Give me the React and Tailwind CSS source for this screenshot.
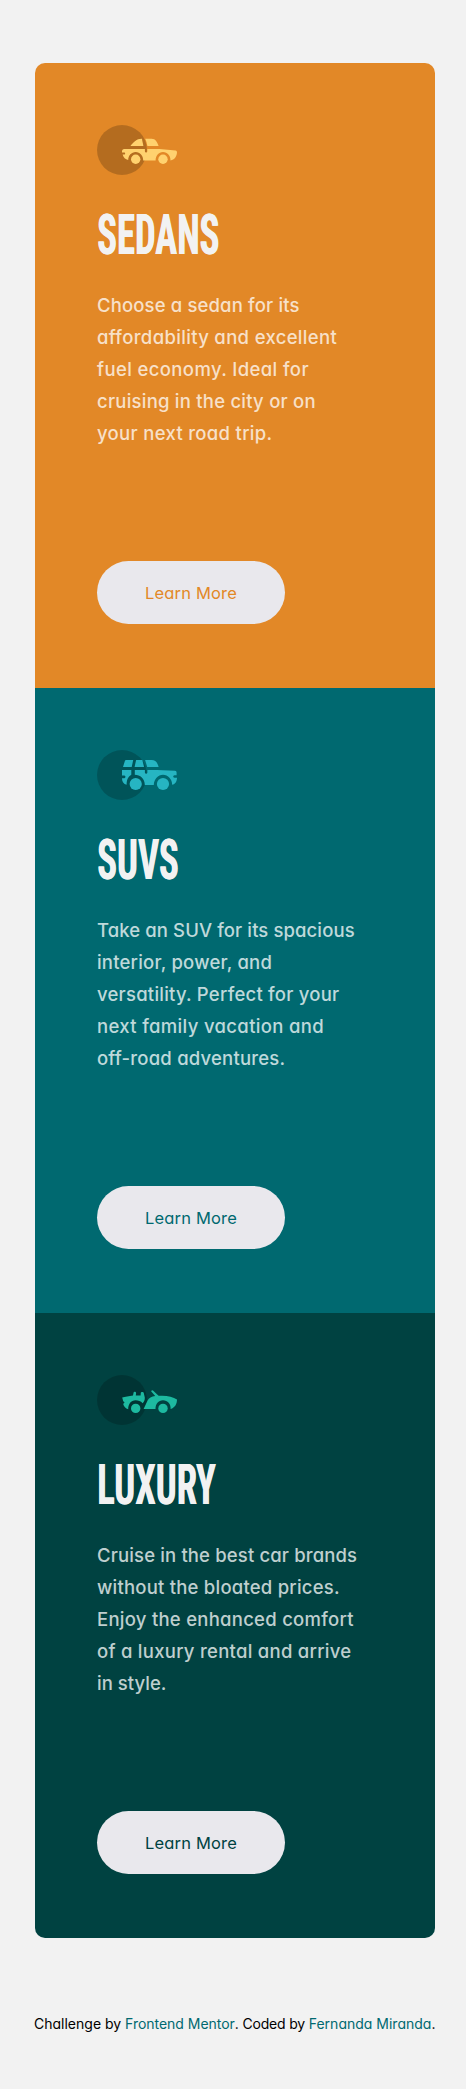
function SedanIcon() {
  return (
    <svg className="block h-[50px] w-20" viewBox="0 0 80 50" aria-hidden="true">
      <circle cx="25" cy="25" r="25" fill="#000" fillOpacity="0.2" />
      <g fill="#ffd26f">
        <path d="M33.4 21C36.6 17.2 39.6 13.8 44.4 13.8H45C45.2 16 46 18.6 46.4 21Z" />
        <path d="M48.2 13.8H54.6C58.6 13.8 60.2 17.2 61.6 21H50.4C50 18.4 49.2 16 48.2 13.8Z" />
        <path d="M27.2 24H47.9V26.2A1.2 1.2 0 0 0 50.3 26.2V24H62.5L78.6 25.6C79.6 25.7 80 26.6 80 27.6C79.7 31.6 77.6 34.9 73.5 35.4C73.6 30.6 70.4 27 66 27C61.6 27 58.6 30.8 58.6 35.4H46.2C46.2 30.6 43 27 38.7 27C34.4 27 31.2 30.6 31.2 35.1C28.3 34.6 26.4 32.6 25.6 29.6H27.4C28.4 29.6 28.4 27.6 27.4 27.6H25V26.4C25 25 25.8 24 27.2 24Z" />
        <circle cx="38.7" cy="34.3" r="4.7" />
        <circle cx="66" cy="34.3" r="4.7" />
      </g>
    </svg>
  );
}

function SuvIcon() {
  return (
    <svg className="block h-[50px] w-20" viewBox="0 0 80 50" aria-hidden="true">
      <circle cx="25" cy="25" r="25" fill="#000" fillOpacity="0.2" />
      <g fill="#26b5c2">
        <path d="M26 17L27.8 11.2C28 10.4 28.6 10 29.4 10H36.2L34.7 17Z" />
        <path d="M39.1 10H45.3L47.1 17H37.6Z" />
        <path d="M48.1 10H54.6C58.7 10 60.5 12.8 61.6 17H50.2Z" />
        <path d="M25 20H34.3V24.8C31.4 26.4 29.7 29.4 29.6 34.7C26.6 34.2 25 31.6 25 28.2H27.4C28.8 28.2 28.8 25.6 27.4 25.6H25Z" />
        <path d="M37.8 20H47.9V22.8A1.3 1.3 0 0 0 50.4 22.8V20H60L78 20.7C79 20.8 79.5 21.4 79.6 22.5V25.2H77.4C75.8 25.2 75.8 27.7 77.4 27.7H80C80 31.4 78.2 34.3 75.2 34.8C75.2 29.2 71 24.8 66 24.8C61 24.8 57 29.2 56.8 35H47.8C47.8 28.6 43.2 24.8 37.8 24.8Z" />
        <circle cx="38.7" cy="34" r="6.1" />
        <circle cx="66" cy="34" r="6.1" />
      </g>
    </svg>
  );
}

function LuxuryIcon() {
  return (
    <svg className="block h-[50px] w-20" viewBox="0 0 80 50" aria-hidden="true">
      <circle cx="25" cy="25" r="25" fill="#000" fillOpacity="0.2" />
      <g fill="#1db9a0">
        <path d="M25.2 22.4C28 22.2 32 21 36 20.6L36.6 17.4C36.8 16.4 39.2 16.8 39.1 18L38.8 20.6H43.6L43.8 17.8C43.8 16.8 46.6 16.8 46.7 17.8L47.8 22.6C48 25 47 27 45.7 28.2C43.6 26 41.3 25.3 38.7 25.3C33.8 25.3 31.2 29.2 31.2 34.2C28.6 33.8 26.8 31.4 26.2 29L27.6 27.2L26.2 26.2Z" />
        <path d="M54.1 16.2C54.7 15 55.8 15.2 56.5 15.9L61.6 20.8C69 20.2 75.8 21.5 80 24.6C80 29 78 32.8 73.6 34.1C74 29.2 70.6 25.3 66 25.3C61.4 25.3 58.4 29 58.5 34.1H46.6L50.6 25.6C51.8 22.9 54.6 21.6 58.2 21Z" />
        <circle cx="38.7" cy="33.4" r="4.7" />
        <circle cx="66" cy="33.4" r="4.7" />
      </g>
    </svg>
  );
}

const cards = [
  {
    title: 'Sedans',
    Icon: SedanIcon,
    bg: 'bg-[#e28827]',
    ink: 'text-[#e28827]',
    lines: [
      ['Choose a sedan for its', 'tracking-[0.14px]'],
      ['affordability and excellent', 'tracking-[0.33px]'],
      ['fuel economy. Ideal for', 'tracking-[0.38px]'],
      ['cruising in the city or on', 'tracking-[0.23px]'],
      ['your next road trip.', 'tracking-[0.31px]'],
    ],
  },
  {
    title: 'SUVs',
    Icon: SuvIcon,
    bg: 'bg-[#006970]',
    ink: 'text-[#006970]',
    lines: [
      ['Take an SUV for its spacious', 'tracking-[0.1px]'],
      ['interior, power, and', 'tracking-[0.21px]'],
      ['versatility. Perfect for your', 'tracking-[0.23px]'],
      ['next family vacation and', 'tracking-[0.34px]'],
      ['off-road adventures.', 'tracking-[0.2px]'],
    ],
  },
  {
    title: 'Luxury',
    Icon: LuxuryIcon,
    bg: 'bg-[#004241]',
    ink: 'text-[#004241]',
    lines: [
      ['Cruise in the best car brands', 'tracking-[0.14px]'],
      ['without the bloated prices.', 'tracking-[0.22px]'],
      ['Enjoy the enhanced comfort', 'tracking-[0.26px]'],
      ['of a luxury rental and arrive', 'tracking-[0.27px]'],
      ['in style.', 'tracking-[0.02px]'],
    ],
  },
];

function Card({ title, Icon, bg, ink, lines }) {
  return (
    <section className={`flex h-[625px] flex-col items-start px-[62px] pt-[62px] pb-16 ${bg}`}>
      <Icon />
      <h2 className="mt-[37px] origin-left scale-x-[0.66] font-['Roboto_Condensed','Roboto',sans-serif] text-[55.5px] leading-[48px] font-bold text-[#f2f2f2] uppercase [text-shadow:0.8px_0_0_#f2f2f2]">
        {title}
      </h2>
      <p className="mt-[29px] text-[18.5px] leading-8 font-medium text-white/75">
        {lines.map(([text, tracking]) => (
          <span key={text} className={`block whitespace-nowrap ${tracking}`}>
            {text}
          </span>
        ))}
      </p>
      <button className={`mt-auto h-[63px] w-[188px] rounded-[32px] bg-[#e9e8ed] pt-0.5 text-[16.5px] tracking-[0.18px] ${ink}`}>
        Learn More
      </button>
    </section>
  );
}

export default function App() {
  return (
    <div className="min-h-[2089px] bg-[#f2f2f2] pt-[63px] pl-[35px] font-['Inter',sans-serif] [font-feature-settings:'cv11']">
      <main className="w-[400px] overflow-hidden rounded-[10px]">
        {cards.map((card) => (
          <Card key={card.title} {...card} />
        ))}
      </main>
      <footer className="mt-19 -ml-px text-[14px] leading-5 whitespace-nowrap text-black">
        Challenge by <a className="tracking-[-0.03px] text-[#006970]">Frontend Mentor</a>
        <span className="tracking-[-0.18px]">. Coded by </span>
        <a className="text-[#006970]">Fernanda Miranda</a>.
      </footer>
    </div>
  );
}
